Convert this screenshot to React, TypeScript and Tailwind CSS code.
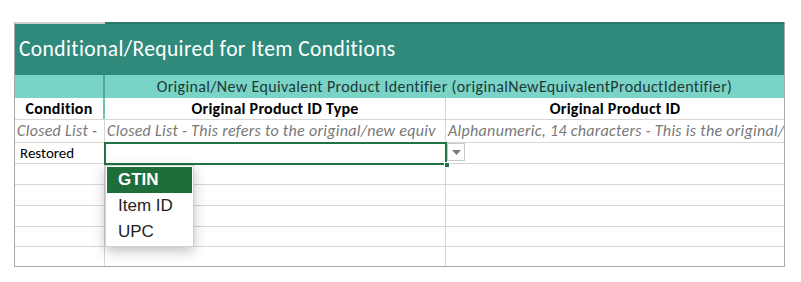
import React from "react";

const font = "font-['Carlito','Lato','Liberation_Sans',sans-serif]";

const Row = ({ h, a, b, c }: { h: string; a?: React.ReactNode; b?: React.ReactNode; c?: React.ReactNode }) => (
  <div className={`flex ${h} border-b border-[#d6d6d6]`}>
    <div className="w-[90px] shrink-0 border-r border-[#d6d6d6] overflow-hidden whitespace-nowrap">{a}</div>
    <div className="w-[341px] shrink-0 border-r border-[#d6d6d6] overflow-hidden whitespace-nowrap">{b}</div>
    <div className="flex-1 overflow-hidden whitespace-nowrap">{c}</div>
  </div>
);

const App = () => {
  return (
    <div className={`w-[801px] h-[282px] bg-white pt-[22px] pl-[14px] ${font}`}>
      <div className="relative w-[771px] border border-[#a8a8a8] border-t-0">
        <div className="flex h-[2px]">
          <div className="w-[90px] bg-[#cfcfcf]" />
          <div className="flex-1 bg-[#2a7a6c]" />
        </div>
        <div className="h-[51px] bg-[#2f8a7b] flex items-center pl-[4px]">
          <span className="text-[21.5px] tracking-[0.4px] text-white leading-none">Conditional/Required for Item Conditions</span>
        </div>
        <div className="flex h-[23px] bg-[#79d3c7]">
          <div className="w-[90px] shrink-0 border-r-2 border-[#4fa597]" />
          <div className="flex-1 text-center text-[16px] tracking-[0.35px] leading-[23px] text-[#1d3a36] whitespace-nowrap">
            Original/New Equivalent Product Identifier (originalNewEquivalentProductIdentifier)
          </div>
        </div>
        <div className="flex h-[22px] border-b border-[#d6d6d6] font-bold text-[16px] tracking-[0.25px] leading-[22px] text-black">
          <div className="w-[90px] shrink-0 border-r-2 border-[#6cbfb2] text-center">Condition</div>
          <div className="w-[341px] shrink-0 border-r border-[#d6d6d6] text-center">Original Product ID Type</div>
          <div className="flex-1 text-center">Original Product ID</div>
        </div>
        <Row
          h="h-[23px] italic text-[16px] tracking-[0.3px] leading-[22px] text-[#787878]"
          a={<span className="pl-[2px]">Closed List -</span>}
          b={<span className="pl-[2px]">Closed List - This refers to the original/new equiv</span>}
          c={<span className="pl-[2px]">Alphanumeric, 14 characters - This is the original/</span>}
        />
        <Row h="h-[21px] text-[15px] leading-[20px] text-black" a={<span className="pl-[5px]">Restored</span>} />
        <Row h="h-[21px]" />
        <Row h="h-[21px]" />
        <Row h="h-[21px]" />
        <Row h="h-[20px]" />
        <div className="flex h-[19px]">
          <div className="w-[90px] shrink-0 border-r border-[#d6d6d6]" />
          <div className="w-[341px] shrink-0 border-r border-[#d6d6d6]" />
          <div className="flex-1" />
        </div>

        {/* selected cell */}
        <div className="absolute left-[89px] top-[120px] w-[343px] h-[23px] border-2 border-[#217346]" />
        <div className="absolute left-[429px] top-[140px] w-[6px] h-[6px] bg-[#217346] border border-white" />
        {/* dropdown arrow button */}
        <div className="absolute left-[432px] top-[121px] w-[18px] h-[18px] bg-white border border-[#c8c8c8] flex items-center justify-center">
          <svg width="9" height="5" viewBox="0 0 9 5">
            <path d="M0 0 L9 0 L4.5 5 Z" fill="#7a7a7a" />
          </svg>
        </div>
        {/* list */}
        <div className="absolute left-[90px] top-[143px] w-[89px] bg-white border border-[#cfcfcf] shadow-[0_4px_12px_rgba(0,0,0,0.25)] p-[1px] font-['Liberation_Sans',sans-serif] text-[17px]">
          <div className="h-[26px] bg-[#1f6e3a] text-white font-bold pl-[11px] leading-[26px]">GTIN</div>
          <div className="h-[26px] text-[#222] pl-[11px] leading-[26px]">Item ID</div>
          <div className="h-[26px] text-[#222] pl-[11px] leading-[26px]">UPC</div>
        </div>
      </div>
    </div>
  );
};

export default App;
